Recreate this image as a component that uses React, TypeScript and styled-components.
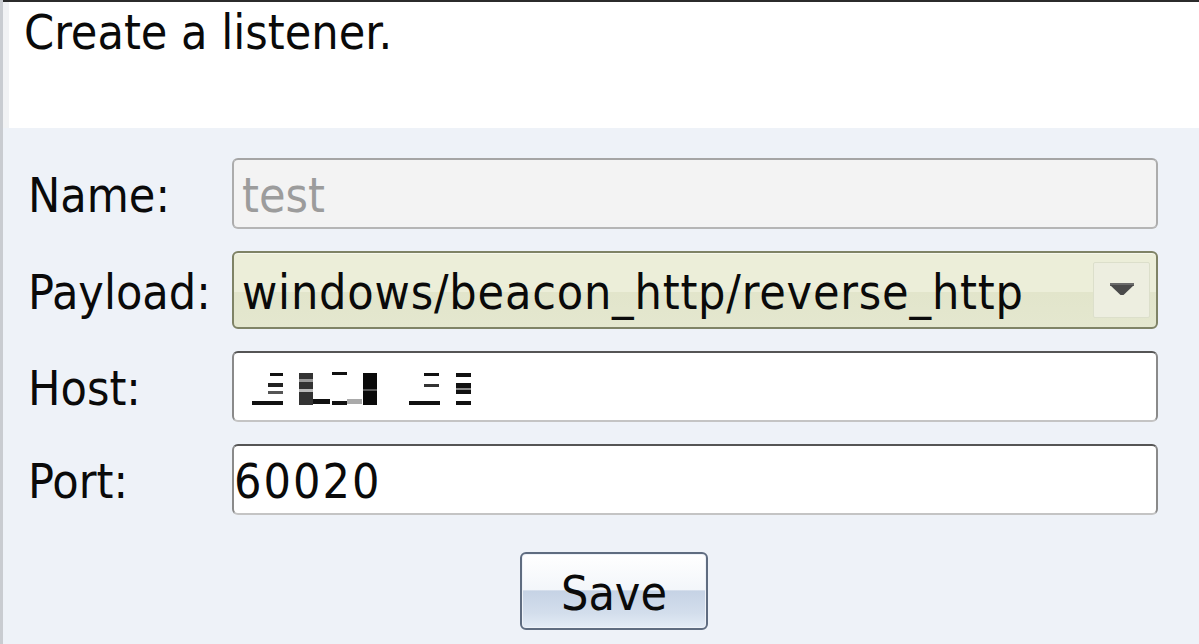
import React from 'react';
import styled, { createGlobalStyle } from 'styled-components';

const GlobalStyle = createGlobalStyle`
  html, body {
    margin: 0;
    padding: 0;
    height: 100%;
    background: #eef2f8;
  }
  #root {
    height: 100%;
  }
  * {
    box-sizing: border-box;
  }
`;

const FONT = `"DejaVu Sans Condensed", "DejaVu Sans", sans-serif`;

const Window = styled.div`
  height: 100vh;
  display: flex;
  flex-direction: column;
  font-family: ${FONT};
  font-stretch: condensed;
  font-size: 48px;
  color: #0a0a0a;
  border-left: 3px solid #c9ccd1;
  overflow: hidden;
`;

const Header = styled.header`
  height: 128px;
  flex: 0 0 auto;
  background: #ffffff;
  border-top: 2px solid #2b2b2b;
  padding: 3px 0 0 21px;
  line-height: 54px;
  box-shadow: inset 6px 0 0 #f1f2f4;
`;

const FormPanel = styled.section`
  flex: 1;
  background: #eef2f8;
  padding: 30px 41px 0 25px;
  display: flex;
  flex-direction: column;
`;

const Grid = styled.div`
  display: grid;
  grid-template-columns: 204px 1fr;
  row-gap: 22px;
  align-items: center;
`;

const Label = styled.label`
  line-height: 54px;
  white-space: nowrap;
  padding-top: 3px;
`;

const TextField = styled.input<{ $disabled?: boolean }>`
  height: 71px;
  width: 100%;
  margin: 0;
  font: inherit;
  font-stretch: condensed;
  letter-spacing: ${({ $disabled }) => ($disabled ? 0 : 2)}px;
  color: ${({ $disabled }) => ($disabled ? '#9c9c9c' : '#0a0a0a')};
  background: ${({ $disabled }) => ($disabled ? '#f3f3f3' : '#ffffff')};
  border: 2px solid ${({ $disabled }) => ($disabled ? '#acacac' : '#8a8a8a')};
  border-top-color: ${({ $disabled }) => ($disabled ? '#a5a5a5' : '#555')};
  border-bottom-color: ${({ $disabled }) => ($disabled ? '#b5b5b5' : '#c4c4c4')};
  border-radius: 6px;
  padding: 3px 0 0 ${({ $disabled }) => ($disabled ? 8 : 0)}px;
  outline: none;
`;

const HostBox = styled.div`
  height: 71px;
  background: #ffffff;
  border: 2px solid #8a8a8a;
  border-top-color: #555;
  border-bottom-color: #c4c4c4;
  border-radius: 6px;
  display: flex;
  align-items: flex-start;
`;

const Combo = styled.div`
  height: 78px;
  display: flex;
  align-items: center;
  padding: 0 6px 0 8px;
  border: 2px solid #7f8366;
  border-radius: 6px;
  background: linear-gradient(#eceed9 0%, #eceed9 52%, #e2e5cb 53%, #e4e7cf 100%);
  box-shadow: inset 0 1px 0 #f6f7ec;
`;

const ComboText = styled.span`
  flex: 1;
  white-space: nowrap;
  overflow: hidden;
  letter-spacing: 0.8px;
  padding-top: 3px;
`;

const ArrowButton = styled.div`
  width: 57px;
  height: 56px;
  display: flex;
  align-items: center;
  justify-content: center;
  background: #edeee0;
  border: 1px solid #dcdfcb;
  border-radius: 2px;
`;

const ButtonRow = styled.div`
  display: flex;
  justify-content: center;
  margin-top: 37px;
  padding-left: 42px;
`;

const SaveButton = styled.button`
  width: 188px;
  height: 78px;
  font: inherit;
  font-stretch: condensed;
  color: #0a0a0a;
  border: 2px solid #5f6c80;
  border-radius: 6px;
  background: linear-gradient(#ffffff 0%, #f3f6fa 48%, #c6d3e5 50%, #d3deec 80%, #e4ecf6 100%);
  box-shadow: inset 0 0 0 1px #eef2f8;
  padding: 3px 0 0;
  line-height: 54px;
  cursor: pointer;
`;

// pixelated / redacted host value
const redactedBars: [number, number, number, number, string][] = [
  [36, 20, 13, 3, '#111'],
  [34, 30, 15, 4, '#222'],
  [34, 38, 15, 3, '#555'],
  [18, 48, 31, 4, '#111'],
  [65, 20, 14, 32, '#333'],
  [65, 26, 14, 3, '#999'],
  [65, 36, 14, 3, '#bbb'],
  [79, 46, 17, 5, '#111'],
  [98, 19, 15, 3, '#111'],
  [98, 48, 15, 4, '#111'],
  [113, 46, 15, 5, '#aaa'],
  [129, 20, 14, 32, '#0a0a0a'],
  [129, 36, 14, 2, '#555'],
  [190, 20, 15, 3, '#111'],
  [190, 31, 15, 3, '#333'],
  [175, 48, 31, 4, '#111'],
  [222, 20, 15, 4, '#111'],
  [222, 30, 15, 11, '#111'],
  [222, 35, 15, 2, '#888'],
  [222, 48, 15, 4, '#111'],
];

function Redacted() {
  return (
    <svg width="320" height="67" viewBox="0 0 320 67">
      {redactedBars.map(([x, y, w, h, c], i) => (
        <rect key={i} x={x} y={y} width={w} height={h} fill={c} />
      ))}
    </svg>
  );
}

function DropArrow() {
  return (
    <svg width="28" height="14" viewBox="0 0 28 14">
      <rect x="2" y="0" width="24" height="3" fill="#6a6a6a" />
      <path d="M2 2 L26 2 L15.5 12 L12.5 12 Z" fill="#4a4a4a" />
    </svg>
  );
}

export default function App() {
  return (
    <>
      <GlobalStyle />
      <Window>
        <Header>Create a listener.</Header>
        <FormPanel>
          <Grid>
            <Label>Name:</Label>
            <TextField $disabled readOnly defaultValue="test" />

            <Label>Payload:</Label>
            <Combo>
              <ComboText>windows/beacon_http/reverse_http</ComboText>
              <ArrowButton>
                <DropArrow />
              </ArrowButton>
            </Combo>

            <Label>Host:</Label>
            <HostBox>
              <Redacted />
            </HostBox>

            <Label>Port:</Label>
            <TextField readOnly defaultValue="60020" />
          </Grid>
          <ButtonRow>
            <SaveButton>Save</SaveButton>
          </ButtonRow>
        </FormPanel>
      </Window>
    </>
  );
}
